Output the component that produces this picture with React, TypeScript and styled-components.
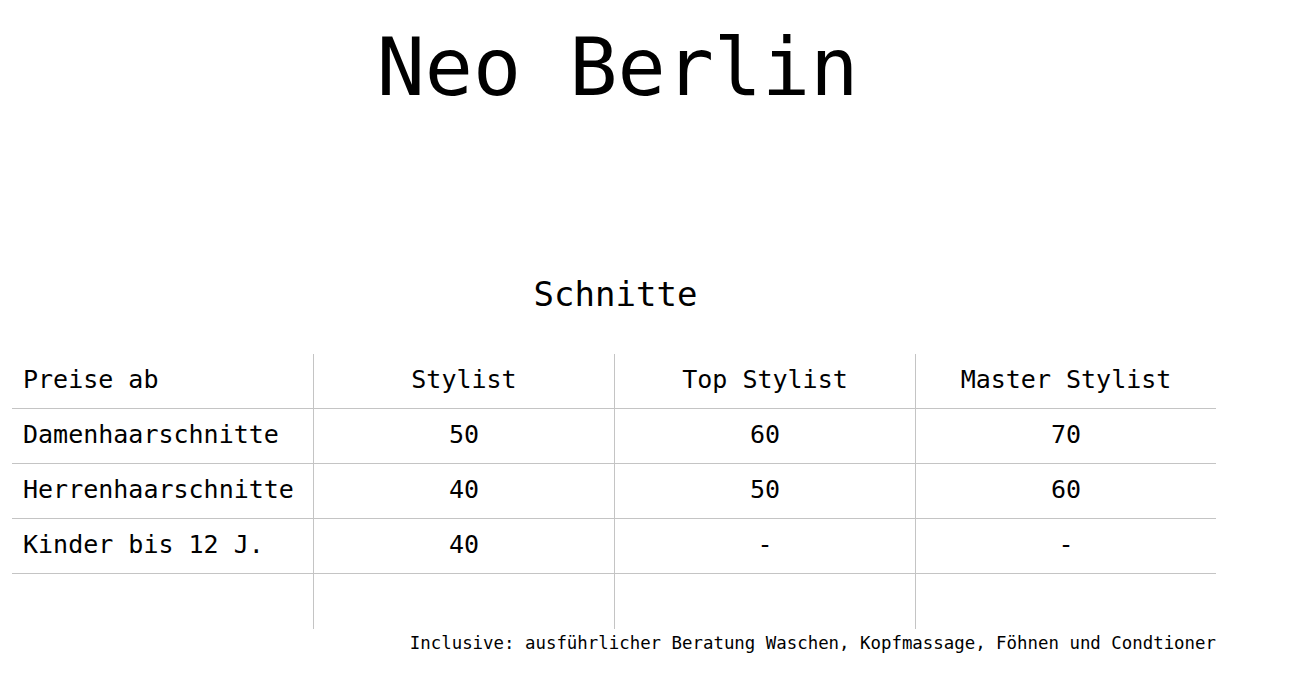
import styled, { createGlobalStyle } from "styled-components";

const GlobalStyle = createGlobalStyle`
  body {
    margin: 0;
    background: #fff;
    color: #000;
    font-family: "DejaVu Sans Mono", "Liberation Mono", monospace;
  }
`;

interface PriceRow {
  label: string;
  prices: string[];
}

const stylists = ["Stylist", "Top Stylist", "Master Stylist"];

const rows: PriceRow[] = [
  { label: "Damenhaarschnitte", prices: ["50", "60", "70"] },
  { label: "Herrenhaarschnitte", prices: ["40", "50", "60"] },
  { label: "Kinder bis 12 J.", prices: ["40", "-", "-"] },
];

export default function App() {
  return (
    <>
      <GlobalStyle />
      <Page>
        <Title>Neo Berlin</Title>
        <SectionTitle>Schnitte</SectionTitle>
        <PriceTable>
          <Cell $first>Preise ab</Cell>
          {stylists.map((s) => (
            <Cell key={s}>{s}</Cell>
          ))}
          {rows.map((row) => (
            <Row key={row.label}>
              <Cell $first>{row.label}</Cell>
              {row.prices.map((p, i) => (
                <Cell key={i}>{p}</Cell>
              ))}
            </Row>
          ))}
          <Cell $first $last />
          <Cell $last />
          <Cell $last />
          <Cell $last />
        </PriceTable>
        <Note>
          Inclusive: ausführlicher Beratung Waschen, Kopfmassage, Föhnen und
          Condtioner
        </Note>
      </Page>
    </>
  );
}

const Page = styled.div`
  width: 1204px;
  padding-left: 12px;
  display: flex;
  flex-direction: column;
`;

const Title = styled.h1`
  margin: 21px 0 0;
  padding-left: 7px;
  font-size: 80px;
  font-weight: normal;
  line-height: normal;
  text-align: center;
`;

const SectionTitle = styled.h2`
  margin: 160px 0 0;
  padding-left: 3px;
  font-size: 34px;
  font-weight: normal;
  line-height: normal;
  text-align: center;
`;

const PriceTable = styled.div`
  margin-top: 40px;
  display: grid;
  grid-template-columns: repeat(4, 301px);
`;

const Row = styled.div`
  display: contents;
`;

const Cell = styled.div<{ $first?: boolean; $last?: boolean }>`
  box-sizing: content-box;
  display: flex;
  align-items: center;
  justify-content: ${(p) => (p.$first ? "flex-start" : "center")};
  padding: 0 0 4px ${(p) => (p.$first ? "11px" : "0")};
  height: ${(p) => (p.$last ? "51px" : "50px")};
  font-size: 25px;
  white-space: nowrap;
  border-bottom: ${(p) => (p.$last ? "none" : "1px solid #c4c4c4")};
  border-left: ${(p) => (p.$first ? "none" : "1px solid #c4c4c4")};
`;

const Note = styled.p`
  margin: 4px 0 0;
  font-size: 17.4px;
  line-height: normal;
  text-align: right;
`;
